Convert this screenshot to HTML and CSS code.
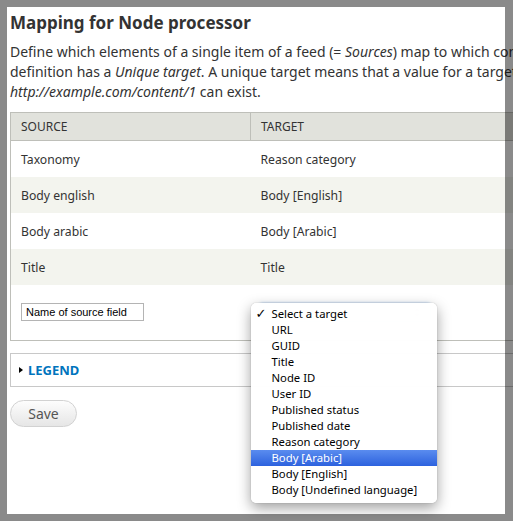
FILE: index.html
```html
<!DOCTYPE html>
<html>
<head>
<meta charset="utf-8">
<link rel="stylesheet" href="styles.css">
</head>
<body>
<div class="screen">
  <div class="page">
    <h1 class="title">Mapping for Node processor</h1>
    <p class="desc">Define which elements of a single item of a feed (= <em>Sources</em>) map to which content pieces in Drupal (= <em>Targets</em>). Make sure that at least one<br>definition has a <em>Unique target</em>. A unique target means that a value for a target can only occur once. E. g. only one item with the URL<br><em>http://example.com/content/1</em> can exist.</p>
    <table class="map">
      <thead>
        <tr><th class="c1">SOURCE</th><th class="c2">TARGET</th></tr>
      </thead>
      <tbody>
        <tr><td>Taxonomy</td><td>Reason category</td></tr>
        <tr class="alt"><td>Body english</td><td>Body [English]</td></tr>
        <tr><td>Body arabic</td><td>Body [Arabic]</td></tr>
        <tr class="alt"><td>Title</td><td>Title</td></tr>
        <tr class="add">
          <td><div class="input">Name of source field</div></td>
          <td class="target-cell">
            <div class="select"><span class="arrows">⇕</span></div>
            <div class="menu">
              <div class="item checked"><span class="check">✓</span>Select a target</div>
              <div class="item">URL</div>
              <div class="item">GUID</div>
              <div class="item">Title</div>
              <div class="item">Node ID</div>
              <div class="item">User ID</div>
              <div class="item">Published status</div>
              <div class="item">Published date</div>
              <div class="item">Reason category</div>
              <div class="item active">Body [Arabic]</div>
              <div class="item">Body [English]</div>
              <div class="item">Body [Undefined language]</div>
            </div>
          </td>
        </tr>
      </tbody>
    </table>
    <div class="legend">
      <span class="tri"></span><span class="legend-label">LEGEND</span>
    </div>
    <div class="actions"><button class="save">Save</button></div>
  </div>
  <div class="frame"></div>
</div>
</body>
</html>
```

FILE: styles.css
```css
html, body {
  margin: 0;
  padding: 0;
  background: #8a8a8a;
}
.screen {
  position: relative;
  width: 513px;
  height: 521px;
  overflow: hidden;
  background: #fff;
}
.page {
  width: 860px;
  padding: 7px 0 0 10px;
  font-family: "Noto Sans", "DejaVu Sans", sans-serif;
  color: #333;
  font-size: 12.2px;
}
.title {
  margin: 6px 0 9px;
  font-size: 17px;
  line-height: 20px;
  font-weight: bold;
  color: #333;
}
.desc {
  margin: 0 0 10px;
  font-size: 14px;
  line-height: 20px;
  white-space: nowrap;
}
.map {
  width: 840px;
  border-collapse: collapse;
  border: 1px solid #bebfb9;
}
.map th {
  background: #e1e2dc;
  font-weight: normal;
  text-align: left;
  font-size: 12px;
  height: 27px;
  padding: 0 10px;
  border-bottom: 1px solid #bebfb9;
}
.map th.c1 {
  width: 219px;
  border-right: 1px solid #bebfb9;
}
.map td {
  height: 36px;
  padding: 0 10px;
  background: #fff;
}
.map tr.alt td {
  background: #f3f4ee;
}
.map tr.add td {
  height: 55px;
  padding: 0 10px;
  vertical-align: top;
}
.input {
  margin-top: 18px;
  width: 117px;
  height: 16px;
  border: 1px solid #b4b4b4;
  padding-left: 4px;
  font-family: "Liberation Sans", Arial, sans-serif;
  font-size: 11px;
  line-height: 16px;
  color: #000;
}
.target-cell {
  position: relative;
}
.select {
  margin: 18px 0 0 -2px;
  width: 170px;
  height: 17px;
  border-radius: 4px;
  border: 1px solid #c9d6e6;
  box-shadow: 0 0 3px #9fc4ee;
  position: relative;
}
.arrows {
  position: absolute;
  right: 8px;
  top: 1px;
  font-size: 10px;
  color: #bbb;
}
.menu {
  position: absolute;
  left: 0;
  top: 18px;
  width: 186px;
  padding: 3px 0 5px;
  background: rgba(255, 255, 255, 0.98);
  border-radius: 5px;
  box-shadow: 0 5px 14px rgba(0, 0, 0, 0.38), 0 0 1px rgba(0, 0, 0, 0.4);
  z-index: 5;
  font-size: 11.3px;
  color: #000;
}
.item {
  height: 16px;
  line-height: 16px;
  padding-left: 21px;
  position: relative;
  white-space: nowrap;
}
.check {
  position: absolute;
  left: 5px;
  top: 0;
  font-size: 13px;
  font-weight: bold;
  font-family: "DejaVu Sans", sans-serif;
}
.item.active {
  background: linear-gradient(#5a8cef, #2d62de);
  color: #fff;
}
.legend {
  margin-top: 12px;
  width: 840px;
  height: 32px;
  border: 1px solid #c8c8c8;
  display: flex;
  align-items: center;
  padding-left: 8px;
  box-sizing: content-box;
}
.tri {
  width: 0;
  height: 0;
  border-top: 3.5px solid transparent;
  border-bottom: 3.5px solid transparent;
  border-left: 4px solid #000;
  margin-right: 5px;
}
.legend-label {
  color: #0074bd;
  font-weight: bold;
  font-size: 13px;
}
.actions {
  margin-top: 13px;
}
.save {
  width: 67px;
  height: 27px;
  border: 1px solid #d2d2d2;
  border-radius: 14px;
  background: linear-gradient(#fdfdfd, #e6e6e6);
  font-family: "Noto Sans", "DejaVu Sans", sans-serif;
  font-size: 14px;
  color: #555;
  padding: 0;
}
.frame {
  position: absolute;
  left: 0;
  top: 0;
  right: 0;
  bottom: 0;
  border-style: solid;
  border-color: rgba(0, 0, 0, 0.46);
  border-width: 7px 8px 7px 7px;
  pointer-events: none;
  z-index: 10;
}
```
